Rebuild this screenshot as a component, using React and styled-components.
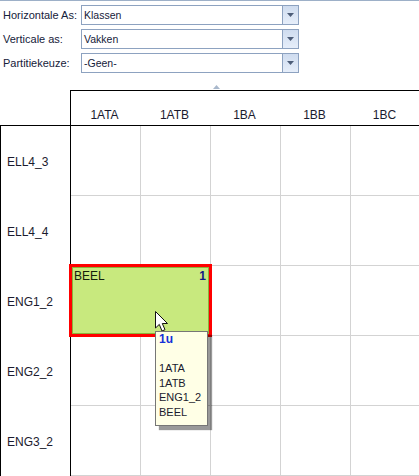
import React from 'react';
import styled, { createGlobalStyle } from 'styled-components';

const GlobalStyle = createGlobalStyle`
  html, body {
    margin: 0;
    padding: 0;
    background: #fff;
    overflow: hidden;
  }
  body {
    font-family: "Liberation Sans", Arial, sans-serif;
    font-size: 11px;
    color: #111;
  }
`;

const Page = styled.div`
  width: 419px;
  height: 476px;
  overflow: hidden;
  border-top: 1px solid #9db0c8;
  box-sizing: border-box;
`;

const Filters = styled.div`
  display: flex;
  flex-direction: column;
  gap: 4px;
  padding: 4px 0 0 3px;
  height: 89px;
  box-sizing: border-box;
  position: relative;
`;

const FilterRow = styled.div`
  display: flex;
  align-items: center;
  height: 20px;
`;

const FilterLabel = styled.label`
  width: 78px;
  font-size: 11px;
  color: #15213a;
`;

const Combo = styled.div`
  display: flex;
  width: 218px;
  height: 20px;
  box-sizing: border-box;
  border: 1px solid #8da2c0;
  background: #fff;
`;

const ComboValue = styled.span`
  flex: 1;
  padding-left: 2px;
  line-height: 18px;
  font-size: 10.5px;
  color: #15213a;
`;

const ComboButton = styled.span`
  width: 15px;
  display: flex;
  align-items: center;
  justify-content: center;
  border-left: 1px solid #8da2c0;
  background: linear-gradient(#cfdcef, #e6eefa);
`;

const SortMark = styled.svg`
  position: absolute;
  left: 213px;
  top: 84px;
`;

const Board = styled.div`
  display: grid;
  grid-template-columns: 71px repeat(5, 70px);
  grid-template-rows: 36px repeat(5, 70px);
  width: 421px;
`;

const Corner = styled.div`
  border-right: 1px solid #000;
  border-bottom: 1px solid #000;
`;

const ColumnHead = styled.div`
  border-top: 1px solid #000;
  border-bottom: 1px solid #000;
  display: flex;
  align-items: flex-end;
  justify-content: center;
  padding: 0 3px 3px 0;
  font-size: 12px;
  color: #1b1b2e;
`;

const RowHead = styled.div`
  border-left: 1px solid #000;
  border-right: 1px solid #000;
  display: flex;
  align-items: center;
  padding: 2px 0 0 6px;
  font-size: 12px;
  color: #1b1b2e;
`;

const Cell = styled.div`
  position: relative;
  border-right: 1px solid #d3d3d3;
  border-bottom: 1px solid #d3d3d3;
`;

const Lesson = styled.div`
  position: absolute;
  left: -2px;
  top: -2px;
  width: 143px;
  height: 73px;
  box-sizing: border-box;
  border: 3px solid #ff0000;
  background: #c8e97e;
  box-shadow: inset 0 0 0 1px #8ab33a;
  display: flex;
  justify-content: space-between;
  padding: 2px 3px 0 2px;
  font-size: 12px;
  color: #14200a;
  z-index: 1;
`;

const LessonCount = styled.b`
  color: #0f1a86;
`;

const Cursor = styled.svg`
  position: absolute;
  left: 84px;
  top: 45px;
  z-index: 2;
`;

const Tip = styled.div`
  position: absolute;
  left: 84px;
  top: 65px;
  width: 53px;
  height: 95px;
  box-sizing: border-box;
  border: 1px solid #767676;
  background: #ffffe6;
  box-shadow: 4px 4px 1px rgba(0, 0, 0, 0.4);
  padding: 0 2px 0 3px;
  font-size: 11px;
  line-height: 14.6px;
  color: #1b1b2e;
  z-index: 3;
`;

const TipTitle = styled.div`
  font-weight: bold;
  font-size: 12px;
  color: #1530d8;
  margin-bottom: 14.6px;
`;

const columns = ['1ATA', '1ATB', '1BA', '1BB', '1BC'];
const rows = ['ELL4_3', 'ELL4_4', 'ENG1_2', 'ENG2_2', 'ENG3_2'];
const filters = [
  ['Horizontale As:', 'Klassen'],
  ['Verticale as:', 'Vakken'],
  ['Partitiekeuze:', '-Geen-'],
];

export default function App() {
  return (
    <Page>
      <GlobalStyle />
      <Filters>
        {filters.map(([label, value]) => (
          <FilterRow key={label}>
            <FilterLabel>{label}</FilterLabel>
            <Combo>
              <ComboValue>{value}</ComboValue>
              <ComboButton>
                <svg width="7" height="4" viewBox="0 0 7 4">
                  <path d="M0 0h7L3.5 4z" fill="#4d5d78" />
                </svg>
              </ComboButton>
            </Combo>
          </FilterRow>
        ))}
        <SortMark width="7" height="4" viewBox="0 0 7 4">
          <path d="M0 4h7L3.5 0z" fill="#a9b8cc" />
        </SortMark>
      </Filters>
      <Board>
        <Corner />
        {columns.map((c) => (
          <ColumnHead key={c}>{c}</ColumnHead>
        ))}
        {rows.map((r, ri) => (
          <React.Fragment key={r}>
            <RowHead>{r}</RowHead>
            {columns.map((c, ci) => (
              <Cell key={c}>
                {ri === 2 && ci === 0 && (
                  <>
                    <Lesson>
                      <span>BEEL</span>
                      <LessonCount>1</LessonCount>
                    </Lesson>
                    <Cursor width="14" height="22" viewBox="0 0 14 22">
                      <path
                        d="M0.5 0.5v16.5l3.8-3.6L7 20l3-1.3-2.7-6.2h5.2z"
                        fill="#fff"
                        stroke="#111"
                        strokeWidth="1"
                      />
                    </Cursor>
                    <Tip>
                      <TipTitle>1u</TipTitle>
                      <div>1ATA</div>
                      <div>1ATB</div>
                      <div>ENG1_2</div>
                      <div>BEEL</div>
                    </Tip>
                  </>
                )}
              </Cell>
            ))}
          </React.Fragment>
        ))}
      </Board>
    </Page>
  );
}
